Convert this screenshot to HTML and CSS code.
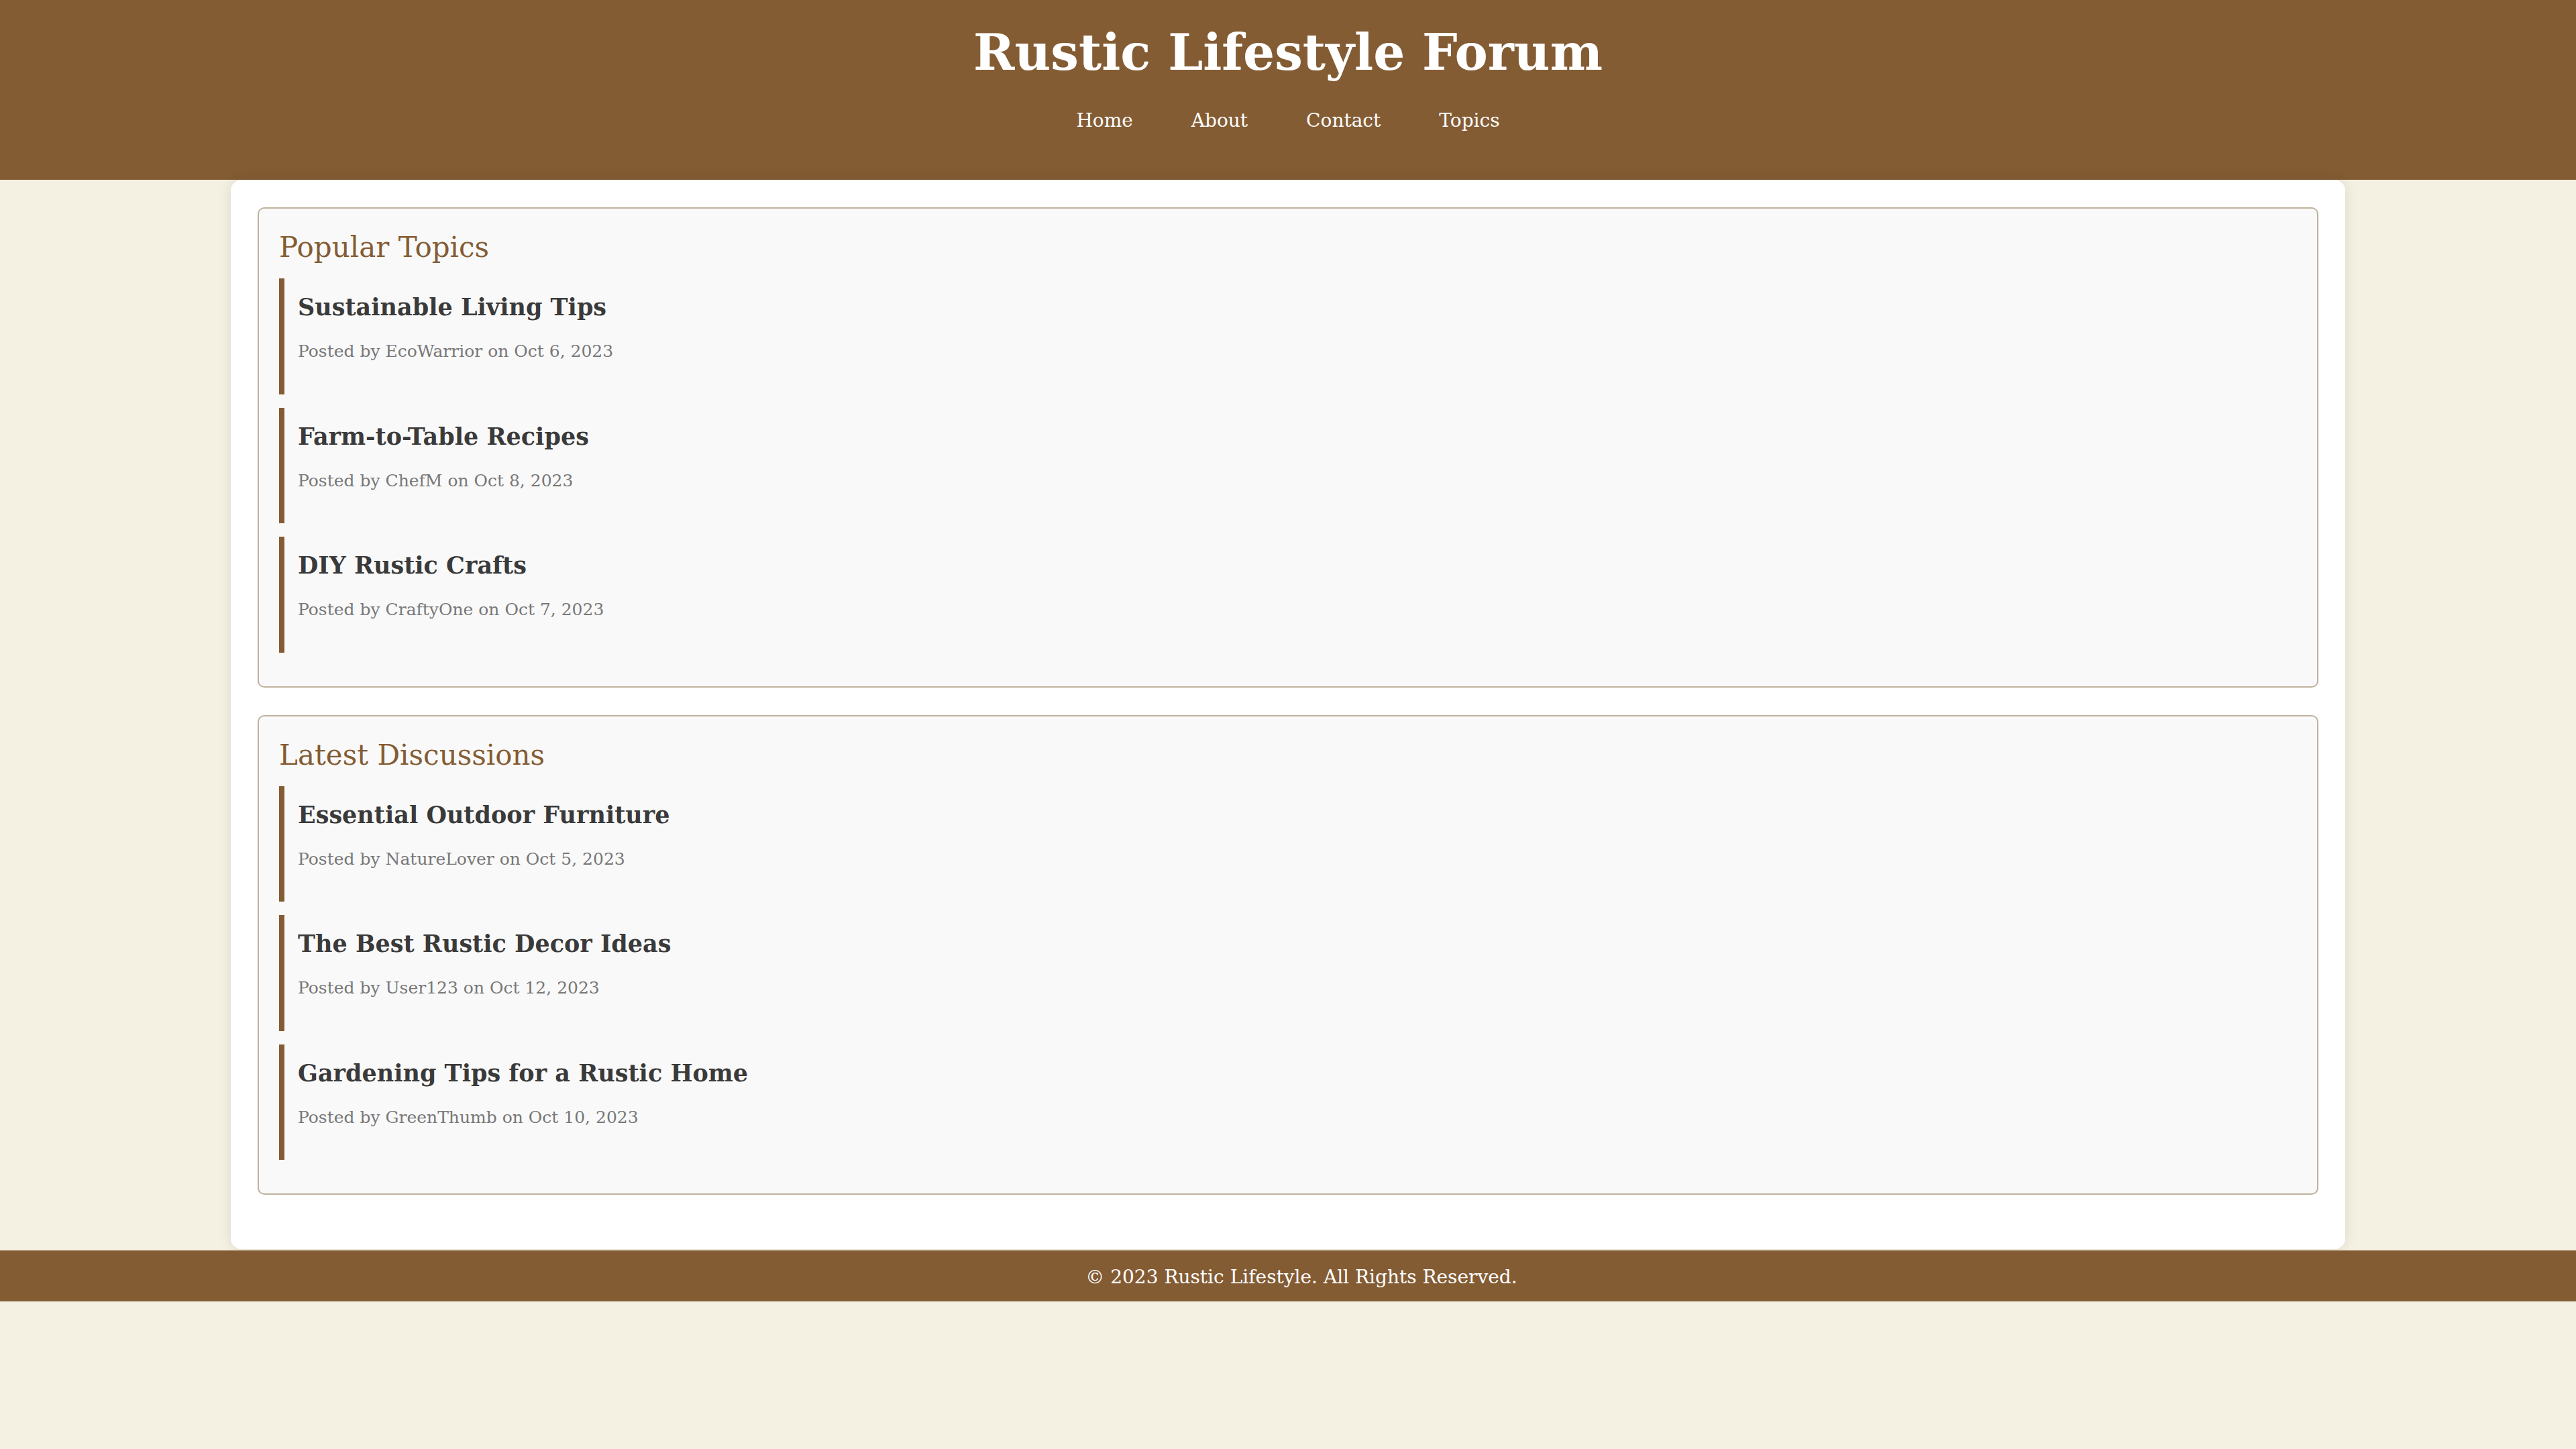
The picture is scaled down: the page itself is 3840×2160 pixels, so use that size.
FILE: index.html
```html
<!DOCTYPE html>
<html lang="en">
<head>
<meta charset="utf-8">
<title>Rustic Lifestyle Forum</title>
<link rel="stylesheet" href="styles.css">
</head>
<body>
<header class="site-header">
  <h1 class="site-title">Rustic Lifestyle Forum</h1>
  <nav class="site-nav">
    <a href="#">Home</a>
    <a href="#">About</a>
    <a href="#">Contact</a>
    <a href="#">Topics</a>
  </nav>
</header>
<main class="container">
  <section class="panel">
    <h2 class="panel-title">Popular Topics</h2>
    <article class="topic">
      <h3 class="topic-title">Sustainable Living Tips</h3>
      <p class="topic-meta">Posted by EcoWarrior on Oct 6, 2023</p>
    </article>
    <article class="topic">
      <h3 class="topic-title">Farm-to-Table Recipes</h3>
      <p class="topic-meta">Posted by ChefM on Oct 8, 2023</p>
    </article>
    <article class="topic">
      <h3 class="topic-title">DIY Rustic Crafts</h3>
      <p class="topic-meta">Posted by CraftyOne on Oct 7, 2023</p>
    </article>
  </section>
  <section class="panel">
    <h2 class="panel-title">Latest Discussions</h2>
    <article class="topic">
      <h3 class="topic-title">Essential Outdoor Furniture</h3>
      <p class="topic-meta">Posted by NatureLover on Oct 5, 2023</p>
    </article>
    <article class="topic">
      <h3 class="topic-title">The Best Rustic Decor Ideas</h3>
      <p class="topic-meta">Posted by User123 on Oct 12, 2023</p>
    </article>
    <article class="topic">
      <h3 class="topic-title">Gardening Tips for a Rustic Home</h3>
      <p class="topic-meta">Posted by GreenThumb on Oct 10, 2023</p>
    </article>
  </section>
</main>
<footer class="site-footer">
  <p class="footer-text">&copy; 2023 Rustic Lifestyle. All Rights Reserved.</p>
</footer>
</body>
</html>
```

FILE: styles.css
```css
html, body {
  margin: 0;
  padding: 0;
}
body {
  background: #f4f1e2;
  font-family: "DejaVu Serif", "Liberation Serif", serif;
  color: #333;
}
.site-header {
  background: #845c34;
  color: #fff;
  text-align: center;
  padding: 32px 0 68px;
}
.site-title {
  margin: 0;
  font-size: 74px;
  line-height: 92px;
  font-weight: bold;
}
.site-nav {
  margin-top: 36px;
  display: flex;
  justify-content: center;
  gap: 87px;
  font-size: 28px;
  line-height: 40px;
}
.site-nav a {
  color: #fff;
  text-decoration: none;
}
.container {
  width: 3072px;
  margin: 0 auto 2px;
  padding: 41px 40px 40px;
  background: #fff;
  border-radius: 16px;
  box-shadow: 0 0 20px rgba(0, 0, 0, 0.1);
}
.panel {
  background: #f9f9f9;
  border: 2px solid #bfb29e;
  border-radius: 10px;
  padding: 30px;
  margin-bottom: 41px;
}
.panel-title {
  margin: 0 0 18px;
  font-size: 42px;
  line-height: 56px;
  font-weight: normal;
  color: #845c34;
}
.topic {
  border-left: 8px solid #845c34;
  padding: 18px 20px 43.5px;
  margin-bottom: 20px;
}
.topic-title {
  margin: 0 0 21px;
  font-size: 35px;
  line-height: 50px;
  font-weight: bold;
  color: #3a3a3a;
}
.topic-meta {
  margin: 0;
  font-size: 25px;
  line-height: 40px;
  color: #777;
}
.site-footer {
  background: #845c34;
  color: #fff;
  text-align: center;
  padding: 22px 0 18px 40px;
}
.footer-text {
  margin: 0;
  font-size: 28px;
  line-height: 36px;
}
```
